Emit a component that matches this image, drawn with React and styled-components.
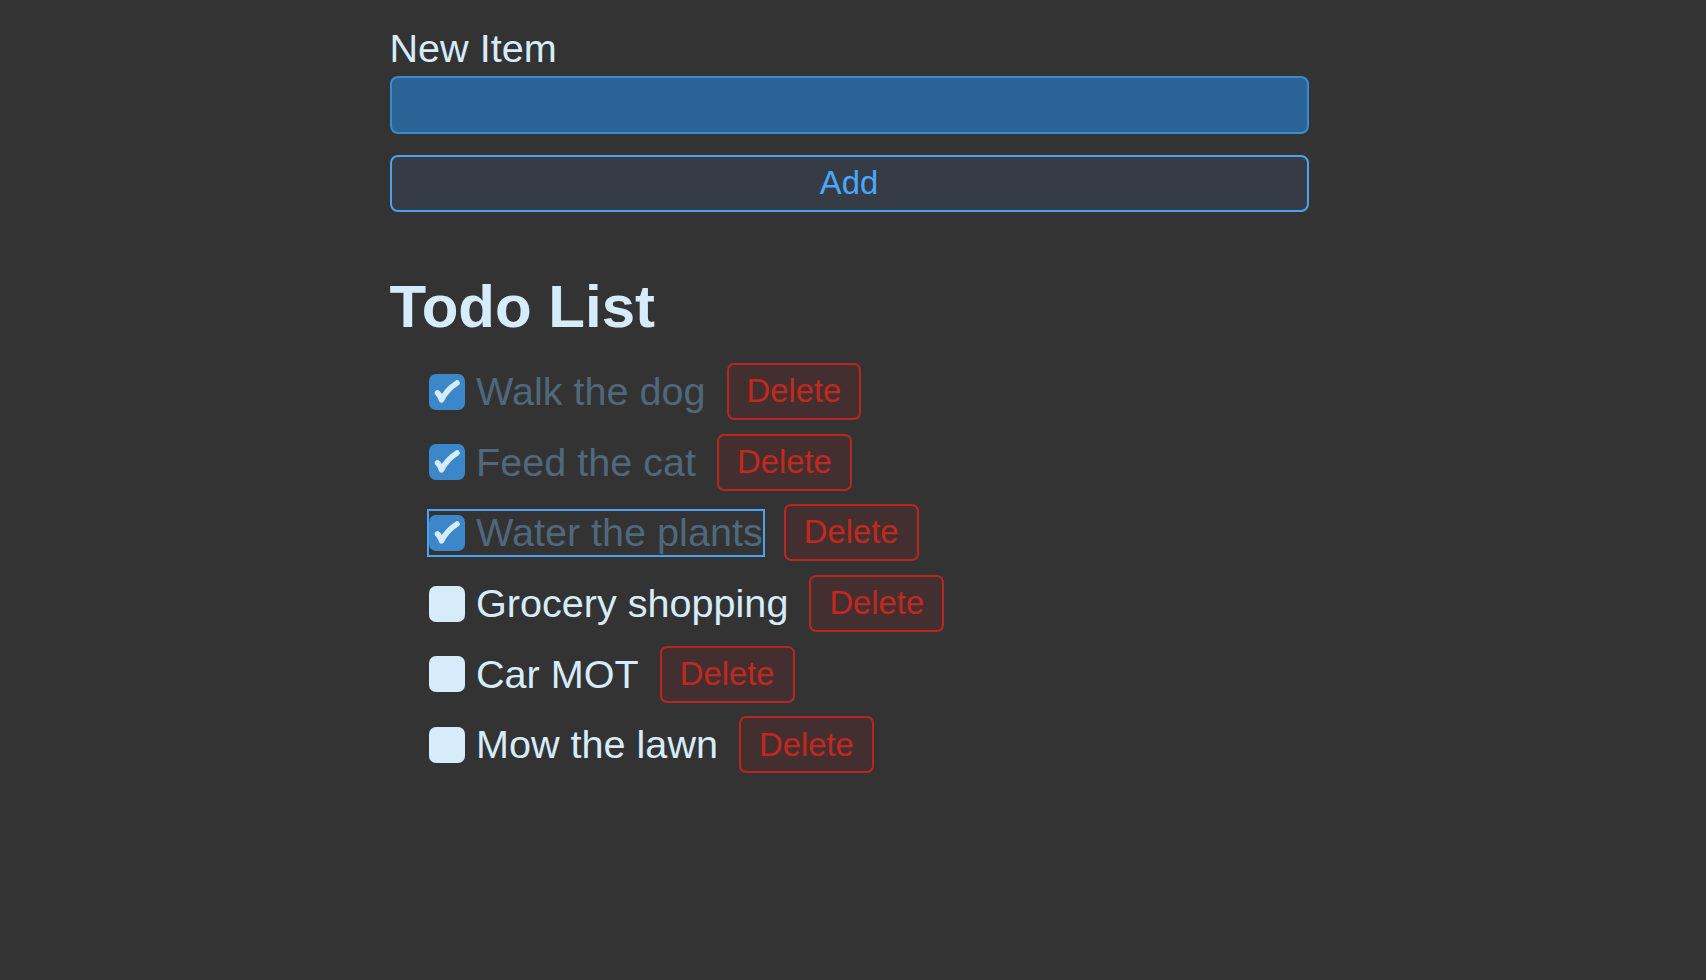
import React, { useState } from 'react'
import styled, { createGlobalStyle } from 'styled-components'

const GlobalStyle = createGlobalStyle`
  html, body {
    margin: 0;
    padding: 0;
    background: #333333;
  }
  body {
    font-family: "Liberation Sans", Helvetica, Arial, sans-serif;
    color: #d6ecfb;
  }
`

const Page = styled.div`
  min-height: 980px;
  box-sizing: border-box;
  padding: 25px 0 0 389.5px;
`

const Panel = styled.div`
  width: 919px;
`

const Label = styled.label`
  display: block;
  font-size: 39.6px;
  line-height: 46px;
  color: #d6ecfb;
`

const TextInput = styled.input`
  display: block;
  box-sizing: border-box;
  width: 100%;
  height: 58px;
  margin-top: 4.5px;
  border: 2px solid #3b8ad0;
  border-radius: 8px;
  background: #2a6496;
  color: #d6ecfb;
  font: inherit;
  font-size: 32px;
  padding: 0 14px;
  outline: none;
`

const AddButton = styled.button`
  display: block;
  box-sizing: border-box;
  width: 100%;
  height: 57.5px;
  margin-top: 21px;
  border: 2px solid #4aa3f0;
  border-radius: 8px;
  background: #363c46;
  color: #4aa8fa;
  font-family: inherit;
  font-size: 32.8px;
  line-height: 1;
  padding: 0;
`

const Heading = styled.h2`
  margin: 59px 0 0;
  font-size: 60px;
  line-height: 71px;
  font-weight: bold;
  color: #d6ecfb;
`

const List = styled.ul`
  list-style: none;
  margin: 21px 0 0;
  padding: 0 0 0 39.5px;
  display: flex;
  flex-direction: column;
  gap: 13.7px;
`

const Row = styled.li`
  display: flex;
  align-items: center;
  gap: 21px;
  height: 57px;
`

const ItemLabel = styled.label`
  display: inline-flex;
  align-items: center;
  gap: 11px;
  height: 44px;
  font-size: 39.6px;
  line-height: 43px;
  color: ${p => (p.$done ? '#50687b' : '#d6ecfb')};
  outline: ${p => (p.$focused ? '2px solid #4aa3f0' : 'none')};
  cursor: pointer;
`

const Box = styled.span`
  flex: none;
  display: flex;
  align-items: center;
  justify-content: center;
  width: 36px;
  height: 36px;
  border-radius: 7px;
  background: ${p => (p.$checked ? '#3b87c9' : '#d6ecfb')};
`

const DeleteButton = styled.button`
  box-sizing: border-box;
  height: 57px;
  padding: 0 18px;
  border: 2px solid #b8271f;
  border-radius: 7px;
  background: #432f2f;
  color: #c1291f;
  font-family: inherit;
  font-size: 32.8px;
  line-height: 1;
`

const Check = () => (
  <svg width="36" height="36" viewBox="0 0 36 36">
    <path
      d="M8.5 19 C10.5 20.5 11.5 23 12.5 26 C16 19 21 13.5 28 9"
      fill="none"
      stroke="#d6ecfb"
      strokeWidth="5.5"
      strokeLinecap="round"
      strokeLinejoin="round"
    />
  </svg>
)

const initial = [
  { text: 'Walk the dog', done: true },
  { text: 'Feed the cat', done: true },
  { text: 'Water the plants', done: true },
  { text: 'Grocery shopping', done: false },
  { text: 'Car MOT', done: false },
  { text: 'Mow the lawn', done: false },
]

export default function App() {
  const [items, setItems] = useState(initial)
  const [draft, setDraft] = useState('')

  const toggle = i =>
    setItems(items.map((it, j) => (j === i ? { ...it, done: !it.done } : it)))
  const remove = i => setItems(items.filter((_, j) => j !== i))
  const add = () => {
    if (!draft.trim()) return
    setItems([...items, { text: draft.trim(), done: false }])
    setDraft('')
  }

  return (
    <Page>
      <GlobalStyle />
      <Panel>
        <Label htmlFor="new-item">New Item</Label>
        <TextInput id="new-item" value={draft} onChange={e => setDraft(e.target.value)} />
        <AddButton onClick={add}>Add</AddButton>

        <Heading>Todo List</Heading>
        <List>
          {items.map((it, i) => (
            <Row key={it.text + i}>
              <ItemLabel $done={it.done} $focused={i === 2} onClick={() => toggle(i)}>
                <Box $checked={it.done}>{it.done && <Check />}</Box>
                {it.text}
              </ItemLabel>
              <DeleteButton onClick={() => remove(i)}>Delete</DeleteButton>
            </Row>
          ))}
        </List>
      </Panel>
    </Page>
  )
}
